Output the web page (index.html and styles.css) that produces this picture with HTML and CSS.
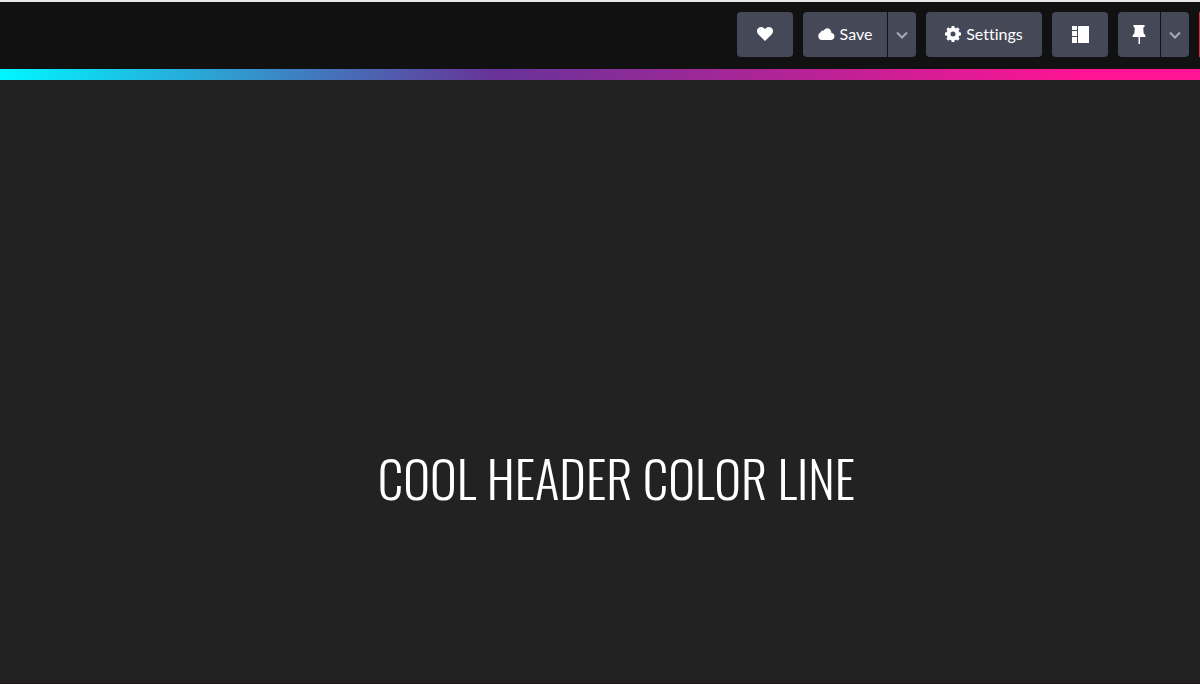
FILE: index.html
```
<!DOCTYPE html>
<html lang="en">
<head>
<meta charset="utf-8">
<title>Cool Header Color Line</title>
<link rel="stylesheet" href="styles.css">
</head>
<body>

<header class="header">
  <button class="btn btn-icon" type="button" aria-label="Love">
    <svg width="16" height="14" viewBox="0 0 16 14"><path d="M8 14 1.200 7.200C-.4 5.500-.4 2.800 1.100 1.200 2.800-.4 5.500-.4 7.100 1.200L8 2.100l.9-.9c1.600-1.600 4.300-1.600 6 0 1.500 1.600 1.500 4.300-.1 6z"/></svg>
  </button>
  <div class="btn-group">
    <button class="btn btn-save" type="button">
      <svg width="17" height="12" viewBox="0 0 17 12"><path d="M4 12a4 4 0 0 1-1.200-7.700C3 2.800 4.600 2 5.700 2.600 7-.6 12-.9 13.200 3.400c.1.500.1.900.1 1.300A3.700 3.700 0 0 1 13.300 12z"/></svg>
      Save
    </button>
    <button class="btn btn-arrow" type="button" aria-label="Save options">
      <svg width="12" height="8" viewBox="0 0 12 8"><path d="m1 1.500 5 5 5-5"/></svg>
    </button>
  </div>
  <button class="btn btn-settings" type="button">
    <svg width="16" height="16" viewBox="-8 -8 16 16">
      <circle class="gear-ring" r="4.500"/>
      <path id="tooth" d="M-1.700-5-1.400-8h2.800l.3 3z"/>
      <use href="#tooth" transform="rotate(45)"/>
      <use href="#tooth" transform="rotate(90)"/>
      <use href="#tooth" transform="rotate(135)"/>
      <use href="#tooth" transform="rotate(180)"/>
      <use href="#tooth" transform="rotate(225)"/>
      <use href="#tooth" transform="rotate(270)"/>
      <use href="#tooth" transform="rotate(315)"/>
    </svg>
    Settings
  </button>
  <button class="btn btn-icon" type="button" aria-label="Change view">
    <svg width="18" height="18" viewBox="0 0 18 18"><path d="M1 1h5v4H1zM1 6h5v5H1zM1 12h5v6H1zM7 1h11v17H7z"/></svg>
  </button>
  <div class="btn-group">
    <button class="btn btn-pin" type="button" aria-label="Pin">
      <svg width="14" height="20" viewBox="0 0 14 20"><path d="M1.500 1h11v2l-1.300.8.500 5.700c1 .7 1.700 1.800 1.900 3.500H8v7H6.500v-7h-6c.2-1.700.9-2.800 1.900-3.500L2.800 3.800 1.500 3z"/></svg>
    </button>
    <button class="btn btn-arrow" type="button" aria-label="Pin options">
      <svg width="12" height="8" viewBox="0 0 12 8"><path d="m1 1.500 5 5 5-5"/></svg>
    </button>
  </div>
  <span class="edge"></span>
</header>
<div class="color-line"></div>

<main class="main">
  <h1 class="title">COOL HEADER COLOR LINE</h1>
</main>

</body>
</html>
```
FILE: styles.css
```
* {
  box-sizing: border-box;
}
body {
  margin: 0;
  min-height: 100vh;
  display: flex;
  flex-direction: column;
  background: #222;
  border-bottom: 1px solid #181418;
  color: #fff;
  font-family: Lato, sans-serif;
}

/* header */
.header {
  display: flex;
  justify-content: flex-end;
  gap: 10px;
  padding: 10px 0 12px;
  background: #111;
  border-top: 2px solid #e4e8ea;
}
.btn {
  display: flex;
  align-items: center;
  justify-content: center;
  gap: 5px;
  height: 45px;
  padding: 0 0 2px;
  border: 0;
  border-radius: 4px;
  background: #444857;
  color: #fff;
  font-family: inherit;
  font-size: 16px;
  font-variant-ligatures: none;
  line-height: 20px;
}
.btn svg {
  fill: #fff;
  overflow: visible;
}
.btn .gear-ring {
  fill: none;
  stroke: #fff;
  stroke-width: 4;
}
.btn-icon {
  width: 56px;
}
.btn-settings {
  width: 116px;
}
.btn-group {
  display: flex;
  gap: 1px;
}
.btn-group .btn:first-child {
  border-radius: 4px 0 0 4px;
}
.btn-group .btn:last-child {
  border-radius: 0 4px 4px 0;
}
.btn-save {
  width: 84px;
}
.btn-pin {
  width: 42px;
}
.btn-arrow {
  width: 28px;
  padding: 0;
}
.btn-arrow svg {
  fill: none;
  stroke: #a9abb8;
  stroke-width: 2;
}
.edge {
  width: 1px;
  background: #e0303a;
}

.color-line {
  height: 11px;
  background: linear-gradient(to right, #00f6ff, #663399 41%, #ff1493 90%);
}

/* content */
.main {
  flex: 1;
  display: flex;
  align-items: center;
  justify-content: center;
  padding: 190px 0 0 33px;
}
.title {
  margin: 0;
  font-family: Oswald, "Open Sans Condensed", "Roboto Condensed", sans-serif;
  font-size: 51px;
  font-weight: 300;
  line-height: 80px;
  white-space: nowrap;
}
```
